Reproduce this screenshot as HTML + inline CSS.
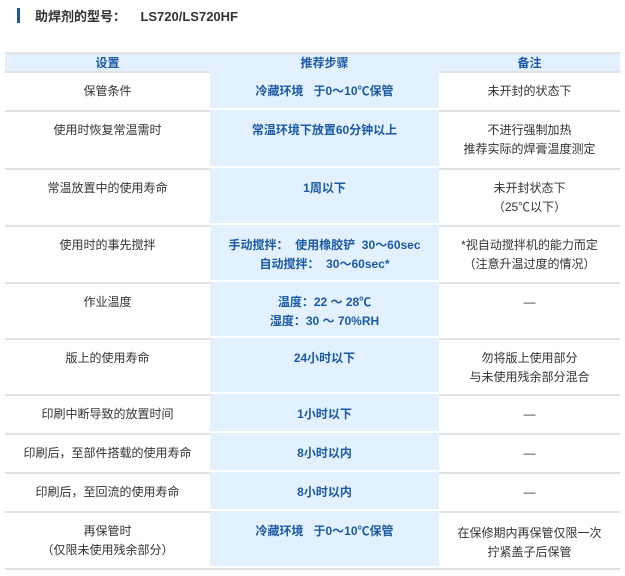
<!DOCTYPE html>
<html><head><meta charset="utf-8"><style>
body{margin:0;background:#fff;width:625px;height:576px;overflow:hidden;font-family:"Liberation Sans","Noto Sans CJK SC",sans-serif;}
.t{position:absolute;left:35px;top:7px;font-size:13px;font-weight:bold;color:#333;line-height:20px}
.bar{position:absolute;left:17px;top:8px;width:3px;height:15px;background:#1a5aa5}
.row{position:absolute;left:5px;width:615px;border-top:2px solid #e2e2e2;box-sizing:border-box;font-size:12px;color:#333;line-height:19px}
.c{position:absolute;top:0;bottom:0;text-align:center;padding-top:9px;box-sizing:border-box}
.c1{left:0;width:205px}.c2{left:205px;width:229px;background:#e3f0fd;color:#1a5aa5;font-weight:bold;margin-top:-2px;padding-top:11px;bottom:2px}.c3{left:434px;width:181px}
.hd{position:absolute;left:5px;top:52px;width:615px;height:20px;background:#e3f0fd;border-top:2px solid #e2e2e2;box-sizing:border-box;color:#1a5aa5;font-weight:bold;font-size:12px;line-height:19px}
.hd div{position:absolute;text-align:center}
</style></head><body>
<div class="bar"></div><div class="t">助焊剂的型号：&nbsp;&nbsp;&nbsp;&nbsp;LS720/LS720HF</div>
<div class="hd"><div style="left:0;width:205px">设置</div><div style="left:205px;width:229px">推荐步骤</div><div style="left:434px;width:181px">备注</div></div>
<div class="row" style="top:71px;height:39px"><div class="c c1">保管条件</div><div class="c c2">冷藏环境&nbsp;&nbsp; 于0～10℃保管</div><div class="c c3">未开封的状态下</div></div>
<div class="row" style="top:110px;height:58px"><div class="c c1">使用时恢复常温需时</div><div class="c c2">常温环境下放置60分钟以上</div><div class="c c3">不进行强制加热<br>推荐实际的焊膏温度测定</div></div>
<div class="row" style="top:168px;height:57px"><div class="c c1">常温放置中的使用寿命</div><div class="c c2">1周以下</div><div class="c c3">未开封状态下<br>（25℃以下）</div></div>
<div class="row" style="top:225px;height:57px"><div class="c c1">使用时的事先搅拌</div><div class="c c2">手动搅拌：&nbsp; 使用橡胶铲&nbsp; 30～60sec<br>自动搅拌：&nbsp; 30～60sec*</div><div class="c c3">*视自动搅拌机的能力而定<br>（注意升温过度的情况）</div></div>
<div class="row" style="top:282px;height:56px"><div class="c c1">作业温度</div><div class="c c2">温度：22 ～ 28℃<br>湿度：30 ～ 70%RH</div><div class="c c3">—</div></div>
<div class="row" style="top:338px;height:56px"><div class="c c1">版上的使用寿命</div><div class="c c2">24小时以下</div><div class="c c3">勿将版上使用部分<br>与未使用残余部分混合</div></div>
<div class="row" style="top:394px;height:39px"><div class="c c1">印刷中断导致的放置时间</div><div class="c c2">1小时以下</div><div class="c c3">—</div></div>
<div class="row" style="top:433px;height:39px"><div class="c c1">印刷后，至部件搭载的使用寿命</div><div class="c c2">8小时以内</div><div class="c c3">—</div></div>
<div class="row" style="top:472px;height:39px"><div class="c c1">印刷后，至回流的使用寿命</div><div class="c c2">8小时以内</div><div class="c c3">—</div></div>
<div class="row" style="top:511px;height:59px;border-bottom:2px solid #e2e2e2"><div class="c c1">再保管时<br>（仅限未使用残余部分）</div><div class="c c2">冷藏环境&nbsp;&nbsp; 于0～10℃保管</div><div class="c c3" style="padding-top:11px">在保修期内再保管仅限一次<br>拧紧盖子后保管</div></div>
</body></html>
